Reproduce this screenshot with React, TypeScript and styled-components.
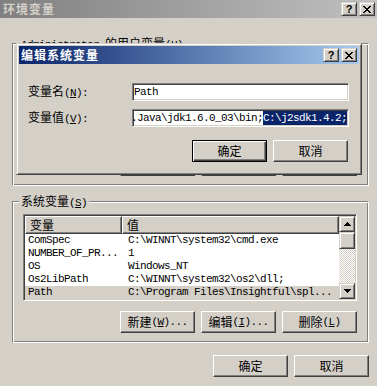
import React from "react";
import styled, { createGlobalStyle, css } from "styled-components";

const CJK = `"Noto Sans CJK SC", "Liberation Sans", sans-serif`;
const MONO = `"Liberation Mono", "DejaVu Sans Mono", monospace`;

const GlobalStyle = createGlobalStyle`
  html, body { margin: 0; padding: 0; background: #d4d0c8; }
  body { font-family: ${CJK}; font-size: 12px; color: #000; }
  * { box-sizing: border-box; }
`;

const raised = css`
  background: #d4d0c8;
  border: 1px solid;
  border-color: #d4d0c8 #404040 #404040 #d4d0c8;
  box-shadow: inset 1px 1px #fff, inset -1px -1px #808080;
`;

const Screen = styled.div`
  position: relative;
  width: 377px;
  height: 386px;
  overflow: hidden;
  background: #d4d0c8;
  display: flex;
  flex-direction: column;
`;

const TitleBar = styled.div<{ $active?: boolean }>`
  height: 18px;
  flex-shrink: 0;
  display: flex;
  align-items: center;
  padding: 0 2px 0 ${(p) => (p.$active ? 2 : 3)}px;
  background: ${(p) =>
    p.$active
      ? "linear-gradient(to right, #0a246a, #a6caf0)"
      : "linear-gradient(to right, #808080, #c0c0c0)"};
`;

const TitleText = styled.span<{ $active?: boolean }>`
  flex: 1;
  font-family: ${CJK};
  font-weight: bold;
  font-size: 12px;
  line-height: 14px;
  letter-spacing: 1px;
  white-space: nowrap;
  color: ${(p) => (p.$active ? "#fff" : "#d4d0c8")};
`;

const CaptionButtons = styled.div`
  display: flex;
  gap: 2px;
`;

const CapBtn = styled.div`
  ${raised};
  width: 16px;
  height: 14px;
  display: flex;
  align-items: center;
  justify-content: center;
`;

const HelpGlyph = styled.span`
  font-family: "Liberation Sans", sans-serif;
  font-weight: bold;
  font-size: 11px;
  line-height: 11px;
  color: #000;
  margin-top: 1px;
`;

const CloseIcon = () => (
  <svg width="8" height="7" viewBox="0 0 8 7" shapeRendering="crispEdges">
    <path
      fill="#000"
      d="M0 0h2v1H0zM6 0h2v1H6zM1 1h2v1H1zM5 1h2v1H5zM2 2h4v1H2zM3 3h2v1H3zM2 4h4v1H2zM1 5h2v1H1zM5 5h2v1H5zM0 6h2v1H0zM6 6h2v1H6z"
    />
  </svg>
);

const ArrowIcon = ({ down }: { down?: boolean }) => (
  <svg
    width="7"
    height="4"
    viewBox="0 0 7 4"
    shapeRendering="crispEdges"
    style={down ? { transform: "scaleY(-1)" } : undefined}
  >
    <path fill="#000" d="M3 0h1v1H3zM2 1h3v1H2zM1 2h5v1H1zM0 3h7v1H0z" />
  </svg>
);

const Body = styled.div`
  display: flex;
  flex-direction: column;
  padding: 0 8px 0 12px;
`;

const Group = styled.div<{ $mt: number }>`
  display: flex;
  flex-direction: column;
  margin-top: ${(p) => p.$mt}px;
  padding: 0 11px 9px 10px;
  border: 1px solid;
  border-color: #808080 #fff #fff #808080;
  box-shadow: inset 1px 1px #fff, inset -1px -1px #808080;
`;

const GroupLabel = styled.div`
  align-self: flex-start;
  height: 12px;
  line-height: 12px;
  margin: -7px 0 7px -4px;
  padding: 0 2px;
  background: #d4d0c8;
  white-space: nowrap;
  font-size: 12px;
`;

const Half = styled.span`
  font-family: ${MONO};
  font-size: 11px;
  letter-spacing: -0.6px;
`;

const ListView = styled.div`
  height: 87px;
  display: flex;
  background: #fff;
  border: 1px solid;
  border-color: #808080 #fff #fff #808080;
  box-shadow: inset 1px 1px #404040, inset -1px -1px #d4d0c8;
  padding: 1px;
`;

const ListMain = styled.div`
  flex: 1;
  display: flex;
  flex-direction: column;
  min-width: 0;
`;

const Header = styled.div`
  display: grid;
  grid-template-columns: 97px 1fr;
  height: 18px;
`;

const HeaderCell = styled.div`
  ${raised};
  border-color: #fff #404040 #404040 #fff;
  box-shadow: inset -1px -1px #808080;
  font-size: 12px;
  line-height: 15px;
  padding-left: 4px;
  white-space: nowrap;
  overflow: hidden;
`;

const Row = styled.div<{ $selected?: boolean }>`
  display: grid;
  grid-template-columns: 97px 1fr;
  height: 13px;
  line-height: 13px;
  background: ${(p) => (p.$selected ? "#d4d0c8" : "transparent")};
  font-family: ${MONO};
  font-size: 11px;
  letter-spacing: -0.6px;
  white-space: nowrap;
`;

const Cell = styled.div<{ $pl: number }>`
  padding-left: ${(p) => p.$pl}px;
  overflow: hidden;
`;

const ScrollBar = styled.div`
  width: 16px;
  flex-shrink: 0;
  display: flex;
  flex-direction: column;
`;

const ScrollBtn = styled.div`
  ${raised};
  height: 16px;
  display: flex;
  align-items: center;
  justify-content: center;
`;

const Thumb = styled.div`
  ${raised};
  height: 17px;
`;

const Track = styled.div`
  flex: 1;
  background-image: conic-gradient(#fff 25%, #d4d0c8 0 50%, #fff 0 75%, #d4d0c8 0);
  background-size: 2px 2px;
`;

const ButtonRow = styled.div<{ $mt: number; $pr?: number }>`
  display: flex;
  justify-content: flex-end;
  gap: 6px;
  margin-top: ${(p) => p.$mt}px;
  padding-right: ${(p) => p.$pr ?? 0}px;
`;

const Button = styled.button<{ $default?: boolean }>`
  width: 75px;
  height: 22px;
  padding: 0;
  margin: 0;
  display: flex;
  align-items: center;
  justify-content: center;
  font-family: ${CJK};
  font-size: 12px;
  line-height: 14px;
  color: #000;
  background: #d4d0c8;
  border: 1px solid;
  border-color: #fff #404040 #404040 #fff;
  box-shadow: inset -1px -1px #808080;
  white-space: nowrap;
  ${(p) =>
    p.$default &&
    css`
      border-color: #000;
      box-shadow: inset 1px 1px #fff, inset -1px -1px #404040, inset -2px -2px #808080;
    `}
`;

const BottomBar = styled.div`
  display: flex;
  justify-content: flex-end;
  gap: 6px;
  margin-top: 12px;
`;

const Dialog = styled.div`
  position: absolute;
  left: 16px;
  top: 43px;
  width: 346px;
  height: 132px;
  display: flex;
  flex-direction: column;
  padding: 2px;
  background: #d4d0c8;
  border: 1px solid;
  border-color: #d4d0c8 #404040 #404040 #d4d0c8;
  box-shadow: inset 1px 1px #fff, inset -1px -1px #808080;
`;

const DialogBody = styled.div`
  display: flex;
  flex-direction: column;
  gap: 8px;
  padding: 19px 10px 0 9px;
`;

const FieldRow = styled.div`
  display: grid;
  grid-template-columns: 104px 217px;
  align-items: center;
`;

const FieldLabel = styled.div`
  font-size: 12px;
  line-height: 14px;
  white-space: nowrap;
`;

const TextField = styled.div`
  height: 18px;
  background: #fff;
  border: 1px solid;
  border-color: #808080 #fff #fff #808080;
  box-shadow: inset 1px 1px #404040, inset -1px -1px #d4d0c8;
  padding: 0 1px;
  overflow: hidden;
  white-space: nowrap;
  font-family: ${MONO};
  font-size: 11px;
  letter-spacing: -0.6px;
  line-height: 16px;
`;

const FieldText = styled.div<{ $indent: number }>`
  margin-left: ${(p) => p.$indent}px;
  white-space: nowrap;
`;

const Sel = styled.span`
  display: inline-block;
  line-height: 14px;
  background: #0a246a;
  color: #fff;
`;

type Var = [string, string];

const systemVars: Var[] = [
  ["ComSpec", "C:\\WINNT\\system32\\cmd.exe"],
  ["NUMBER_OF_PR...", "1"],
  ["OS", "Windows_NT"],
  ["Os2LibPath", "C:\\WINNT\\system32\\os2\\dll;"],
  ["Path", "C:\\Program Files\\Insightful\\spl..."],
];

const userVars: Var[] = [
  ["TEMP", "C:\\Documents and Settings\\Adm..."],
  ["TMP", "C:\\Documents and Settings\\Adm..."],
];

function VarList({ vars, selected, scroll }: { vars: Var[]; selected?: number; scroll?: boolean }) {
  return (
    <ListView>
      <ListMain>
        <Header>
          <HeaderCell>变量</HeaderCell>
          <HeaderCell>值</HeaderCell>
        </Header>
        {vars.map(([name, value], i) => (
          <Row key={name} $selected={i === selected}>
            <Cell $pl={3}>{name}</Cell>
            <Cell $pl={6}>{value}</Cell>
          </Row>
        ))}
      </ListMain>
      {scroll && (
        <ScrollBar>
          <ScrollBtn>
            <ArrowIcon />
          </ScrollBtn>
          <Thumb />
          <Track />
          <ScrollBtn>
            <ArrowIcon down />
          </ScrollBtn>
        </ScrollBar>
      )}
    </ListView>
  );
}

function Acc({ pre, k, post = ")" }: { pre: string; k: string; post?: string }) {
  return (
    <>
      {pre}
      <Half>
        (<u>{k}</u>
        {post}
      </Half>
    </>
  );
}

export default function App() {
  return (
    <>
      <GlobalStyle />
      <Screen>
        <TitleBar>
          <TitleText>环境变量</TitleText>
          <CaptionButtons>
            <CapBtn>
              <HelpGlyph>?</HelpGlyph>
            </CapBtn>
            <CapBtn>
              <CloseIcon />
            </CapBtn>
          </CaptionButtons>
        </TitleBar>
        <Body>
          <Group $mt={25}>
            <GroupLabel>
              <Half>Administrator </Half>
              <Acc pre="的用户变量" k="U" />
            </GroupLabel>
            <VarList vars={userVars} />
            <ButtonRow $mt={11}>
              <Button>
                <Acc pre="新建" k="N" post=")..." />
              </Button>
              <Button>
                <Acc pre="编辑" k="E" post=")..." />
              </Button>
              <Button>
                <Acc pre="删除" k="D" />
              </Button>
            </ButtonRow>
          </Group>
          <Group $mt={15}>
            <GroupLabel>
              <Acc pre="系统变量" k="S" />
            </GroupLabel>
            <VarList vars={systemVars} selected={4} scroll />
            <ButtonRow $mt={10}>
              <Button>
                <Acc pre="新建" k="W" post=")..." />
              </Button>
              <Button>
                <Acc pre="编辑" k="I" post=")..." />
              </Button>
              <Button>
                <Acc pre="删除" k="L" />
              </Button>
            </ButtonRow>
          </Group>
          <BottomBar>
            <Button>确定</Button>
            <Button>取消</Button>
          </BottomBar>
        </Body>

        <Dialog>
          <TitleBar $active>
            <TitleText $active>编辑系统变量</TitleText>
            <CaptionButtons>
              <CapBtn>
                <HelpGlyph>?</HelpGlyph>
              </CapBtn>
              <CapBtn>
                <CloseIcon />
              </CapBtn>
            </CaptionButtons>
          </TitleBar>
          <DialogBody>
            <FieldRow>
              <FieldLabel>
                <Acc pre="变量名" k="N" post="):" />
              </FieldLabel>
              <TextField>
                <FieldText $indent={0}>Path</FieldText>
              </TextField>
            </FieldRow>
            <FieldRow>
              <FieldLabel>
                <Acc pre="变量值" k="V" post="):" />
              </FieldLabel>
              <TextField>
                <FieldText $indent={-3}>
                  .Java\jdk1.6.0_03\bin;<Sel>C:\j2sdk1.4.2;</Sel>
                </FieldText>
              </TextField>
            </FieldRow>
            <ButtonRow $mt={5} $pr={1}>
              <Button $default>确定</Button>
              <Button>取消</Button>
            </ButtonRow>
          </DialogBody>
        </Dialog>
      </Screen>
    </>
  );
}
